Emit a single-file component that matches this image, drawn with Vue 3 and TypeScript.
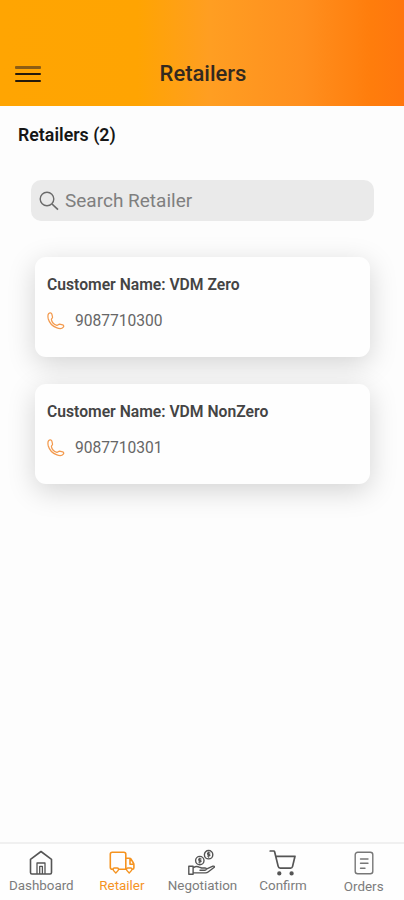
<script setup lang="ts">
import { ref, computed } from 'vue'

interface Retailer {
  name: string
  phone: string
}

type TabId = 'dashboard' | 'retailer' | 'negotiation' | 'confirm' | 'orders'

interface Tab {
  id: TabId
  label: string
}

const retailers: Retailer[] = [
  { name: 'VDM Zero', phone: '9087710300' },
  { name: 'VDM NonZero', phone: '9087710301' },
]

const tabs: Tab[] = [
  { id: 'dashboard', label: 'Dashboard' },
  { id: 'retailer', label: 'Retailer' },
  { id: 'negotiation', label: 'Negotiation' },
  { id: 'confirm', label: 'Confirm' },
  { id: 'orders', label: 'Orders' },
]

const active = ref<TabId>('retailer')
const query = ref('')

const visible = computed(() =>
  retailers.filter((r) => r.name.toLowerCase().includes(query.value.toLowerCase())),
)
</script>

<template>
  <div class="screen">
    <header class="topbar">
      <button class="menu" aria-label="Menu">
        <span class="bar bar-soft"></span>
        <span class="bar"></span>
        <span class="bar"></span>
      </button>
      <h1 class="title">Retailers</h1>
    </header>

    <main class="content">
      <h2 class="count">Retailers ({{ retailers.length }})</h2>

      <label class="search">
        <svg class="search-icon" viewBox="0 0 20 20" fill="none" stroke="currentColor" stroke-width="1.4">
          <circle cx="8" cy="8" r="6.8" />
          <path d="M13 13l6 5.6" stroke-width="1.7" />
        </svg>
        <input v-model="query" class="search-input" type="text" placeholder="Search Retailer" />
      </label>

      <section class="cards">
        <article v-for="r in visible" :key="r.phone" class="card">
          <h3 class="name">Customer Name: {{ r.name }}</h3>
          <div class="phone">
            <svg class="phone-icon" viewBox="0 0 18 18" fill="none" stroke="currentColor" stroke-width="1.25" stroke-linejoin="round">
              <path d="M1.600 1.700C2.700.500 4.300.700 4.800 1.900L5.500 4.900C5.800 6.100 4.300 6.700 4.400 7.700C4.900 10.300 7.200 12.600 9.900 13.300C10.900 13.500 11.400 12.100 12.600 12.200L15.700 12.900C16.800 13.200 17 14.300 16.300 15.200C15.100 16.800 12.300 16.900 9.400 15.700C5.500 14.100 2.400 10.800 1.300 7C.8 4.900.8 2.800 1.600 1.700Z" />
            </svg>
            <span>{{ r.phone }}</span>
          </div>
        </article>
      </section>
    </main>

    <nav class="tabs">
      <button
        v-for="t in tabs"
        :key="t.id"
        class="tab"
        :class="[t.id, { active: active === t.id }]"
        @click="active = t.id"
      >
        <svg v-if="t.id === 'dashboard'" class="icon" viewBox="0 0 28 28" fill="none" stroke="currentColor" stroke-width="1.6" stroke-linejoin="round">
          <path d="M3.500 10.400L14 2.500l10.500 7.900v13.200q0 1.400-1.400 1.400H4.900q-1.400 0-1.400-1.400z" />
          <path d="M10 25V14h8V25M12.700 25v-7.700h2.700V25" stroke-width="1.300" />
        </svg>
        <svg v-else-if="t.id === 'retailer'" class="icon" viewBox="0 0 28 28" fill="none" stroke="currentColor" stroke-width="1.6" stroke-linejoin="round">
          <path d="M5.500 20.300H4.300q-2 0-2-2V5.300q0-2 2-2h11.500q2 0 2 2v15H10.500M18 9.300h3.300q1.200 0 1.900 1l2.200 3.700q.5.800.5 1.800v3q0 1.500-1.500 1.500H24M26 15.300h-4V9.500" />
          <path d="M5 20.300q0-1.300 1.300-1.300h3q1.300 0 1.300 1.300 0 1-2.800 3.700Q5 21.300 5 20.300zM18.400 20.300q0-1.300 1.300-1.300h3q1.300 0 1.300 1.300 0 1-2.800 3.700-2.800-2.700-2.800-3.700z" stroke-width="1.400" />
        </svg>
        <svg v-else-if="t.id === 'negotiation'" class="icon" viewBox="0 0 28 28" fill="none" stroke="currentColor" stroke-width="1.4" stroke-linejoin="round" stroke-linecap="round">
          <circle cx="20.600" cy="5.700" r="4.200" />
          <circle cx="11.800" cy="11.600" r="4.200" />
          <path d="M21.900 4q-2.600-.8-2.400.700t2 1q1.400.900-1.800 1.500M20.600 3.200v5M13.100 10q-2.600-.8-2.400.7t2 1q1.400.9-1.800 1.500M11.800 9.100v5" stroke-width="1.200" />
          <path d="M.8 17.300h4.300v8H.8zM5.400 18.600q3.200-2 5.800-.4l2.400.8h3.400q1.500.1 1.300 1.200t-1.500 1.100H12M18.300 20.200l6.600-3q1.900-.3 1.400 1l-6.200 4.800q-1 .9-2.600.9H5.400" />
        </svg>
        <svg v-else-if="t.id === 'confirm'" class="icon" viewBox="0 0 28 28" fill="none" stroke="currentColor" stroke-width="1.700" stroke-linejoin="round" stroke-linecap="round">
          <path d="M1.200 2h3.400q.8 0 1 .8L9.200 17.400q.4 1.700 2 1.700H21.600q1.500 0 1.900-1.500L26 7.300H7" />
          <circle cx="10.300" cy="24.400" r="1.300" fill="currentColor" />
          <circle cx="22.600" cy="24.400" r="1.300" fill="currentColor" />
        </svg>
        <svg v-else class="icon" viewBox="0 0 28 28" fill="none" stroke="currentColor" stroke-width="1.400" stroke-linecap="round">
          <rect x="5.200" y="3.200" width="17.600" height="21.600" rx="2.500" />
          <path d="M10.500 10h7.500M10.500 14.200h7.500M10.500 19.200h4.500" />
        </svg>
        <span class="label">{{ t.label }}</span>
      </button>
    </nav>
  </div>
</template>

<style>
body {
  margin: 0;
}
</style>

<style scoped>
.screen {
  display: flex;
  flex-direction: column;
  height: 100vh;
  overflow: hidden;
  background: #fdfdfd;
  font-family: Roboto, 'Liberation Sans', sans-serif;
}

button {
  padding: 0;
  border: 0;
  background: none;
  font: inherit;
}

.topbar {
  display: grid;
  grid-template-columns: 42px 1fr 42px;
  align-items: center;
  box-sizing: border-box;
  height: 106px;
  padding: 41px 0 0;
  background: linear-gradient(90deg, #ffa502 0%, #ffa402 34%, #ff9e22 52%, #ff8f1e 75%, #ff7d0c 92%, #ff760d 100%);
}

.menu {
  display: flex;
  flex-direction: column;
  gap: 5px;
  padding-left: 15px;
}

.bar {
  width: 26px;
  height: 2px;
  border-radius: 1px;
  background: #241a0c;
}

.bar-soft {
  height: 3px;
  margin-bottom: -1px;
  background: #8d5d14;
}

.title {
  margin: 0 0 0 2px;
  text-align: center;
  font-size: 22px;
  line-height: 26px;
  font-weight: 500;
  color: #33291f;
}

.content {
  flex: 1;
  min-height: 0;
}

.count {
  margin: 18px 0 0 18px;
  font-size: 17.8px;
  line-height: 22px;
  font-weight: 600;
  color: #161616;
}

.search {
  display: flex;
  align-items: center;
  gap: 6px;
  box-sizing: border-box;
  height: 41px;
  margin: 34px 30px 0 31px;
  padding: 0 8px;
  border-radius: 10px;
  background: #eaeaea;
}

.search-icon {
  width: 20px;
  height: 20px;
  color: #6b6b6b;
}

.search-input {
  flex: 1;
  min-width: 0;
  padding: 0;
  border: 0;
  outline: 0;
  background: none;
  font: 400 19px/24px Roboto, 'Liberation Sans', sans-serif;
  color: #333;
}

.search-input::placeholder {
  color: #7f7f7f;
  opacity: 1;
}

.cards {
  display: flex;
  flex-direction: column;
  gap: 27px;
  padding: 36px 34px 0 35px;
}

.card {
  box-sizing: border-box;
  height: 100px;
  padding: 18px 12px 0;
  border-radius: 11px;
  background: #fefefe;
  box-shadow: 0 7px 28px rgba(0, 0, 0, 0.17);
}

.name {
  margin: 0;
  font-size: 15.7px;
  line-height: 20px;
  font-weight: 600;
  color: #444;
}

.phone {
  display: flex;
  align-items: center;
  gap: 10px;
  margin-top: 16px;
  font-size: 15.6px;
  line-height: 20px;
  color: #666;
}

.phone-icon {
  width: 18px;
  height: 18px;
  color: #f39a4e;
}

.tabs {
  display: grid;
  grid-template-columns: repeat(5, 1fr);
  box-sizing: border-box;
  height: 58px;
  padding-left: 1px;
  border-top: 2px solid #f0f0f0;
  background: #fefefe;
}

.tab {
  display: flex;
  flex-direction: column;
  align-items: center;
  gap: 1px;
  padding-top: 5px;
  color: #555;
}

.icon {
  width: 28px;
  height: 28px;
}

.orders .icon {
  color: #777;
}

.label {
  font-size: 13.4px;
  line-height: 16px;
  white-space: nowrap;
  color: #7c7c7c;
}

.orders .label {
  padding-top: 1px;
}

.active,
.active .label {
  color: #f5931f;
}
</style>
